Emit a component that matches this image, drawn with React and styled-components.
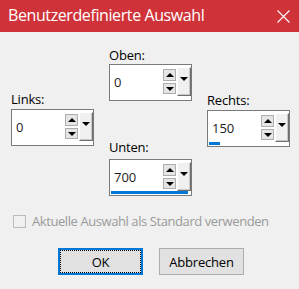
import styled, { createGlobalStyle } from 'styled-components';

const GlobalStyle = createGlobalStyle`
    html, body {
        margin: 0;
        padding: 0;
        background: #f0f0f0;
    }
    * {
        box-sizing: border-box;
    }
`;

const Window = styled.div`
    width: 299px;
    height: 289px;
    background: #f0f0f0;
    font-family: "Open Sans", "Noto Sans", sans-serif;
    font-size: 13px;
    color: #000;
    overflow: hidden;
`;

const TitleBar = styled.div`
    display: flex;
    height: 32px;
    align-items: center;
    justify-content: space-between;
    padding: 0 9px 0 8px;
    background: #cf3339;
    color: #fff;
`;

const Title = styled.span`
    font-size: 16px;
    letter-spacing: -0.4px;
    margin-top: -2px;
`;

const Body = styled.div`
    display: flex;
    flex-direction: column;
    padding: 0 0 0 11px;
`;

const Fields = styled.div`
    display: flex;
    gap: 15px;
`;

const Column = styled.div`
    display: flex;
    flex-direction: column;
    padding-top: ${p => p.$top}px;
`;

const Field = styled.div`
    display: flex;
    flex-direction: column;
    margin-top: ${p => p.$gap || 0}px;
`;

const Label = styled.label`
    height: 16px;
    line-height: 16px;
    margin-bottom: ${p => p.$space}px;
    letter-spacing: -0.2px;
`;

const SpinBox = styled.div`
    display: grid;
    grid-template-columns: 1fr 13px 14px;
    grid-template-rows: 31px 3px;
    column-gap: 1px;
    width: 83px;
    height: 37px;
    border: 1px solid #7a7a7a;
    background: #fff;
`;

const Value = styled.span`
    align-self: center;
    padding-left: 4px;
    padding-top: 3px;
    font-size: 13px;
    color: #1c1c1c;
`;

const Spinner = styled.div`
    display: flex;
    flex-direction: column;
    gap: 2px;
    padding-top: 4px;
`;

const SpinButton = styled.div`
    display: flex;
    height: ${p => p.$h}px;
    align-items: center;
    justify-content: center;
    border: 1px solid #adadad;
    background: #e5e5e5;
`;

const Arrow = styled.span`
    width: 0;
    height: 0;
    border-left: ${p => p.$w}px solid transparent;
    border-right: ${p => p.$w}px solid transparent;
    border-bottom: ${p => (p.$up ? '4px solid #000' : 'none')};
    border-top: ${p => (p.$up ? 'none' : '4px solid #000')};
`;

const DropButton = styled.div`
    display: flex;
    justify-content: center;
    margin-top: 2px;
    padding-top: 9px;
    border-top: 1px solid #fff;
    border-left: 1px solid #fff;
    border-right: 1px solid #6f6f6f;
    border-bottom: 1px solid #6f6f6f;
    background: #f0f0f0;
    box-shadow: inset -1px -1px 0 #c8c8c8;
`;

const Track = styled.div`
    grid-column: 1 / -1;
    padding: 0 2px 1px 1px;
`;

const Bar = styled.div`
    height: 3px;
    background: #0078d7;
`;

const CheckRow = styled.div`
    display: flex;
    align-items: center;
    gap: 6px;
    margin-top: 16px;
    margin-left: 2px;
    color: #9a9a9a;
    letter-spacing: -0.42px;
`;

const CheckBox = styled.span`
    width: 13px;
    height: 13px;
    border: 1px solid #bcbcbc;
    background: #f0f0f0;
`;

const Buttons = styled.div`
    display: flex;
    gap: 16px;
    margin-top: 18px;
    margin-left: 47px;
`;

const Button = styled.button`
    width: 85px;
    height: 27px;
    padding: 0;
    font-family: inherit;
    font-size: 13px;
    color: #000;
    background: #e1e1e1;
    border: ${p => (p.$default ? '2px solid #0078d7' : '1px solid #adadad')};
    letter-spacing: -0.2px;
`;

const Focus = styled.span`
    display: flex;
    height: 100%;
    align-items: center;
    justify-content: center;
    border: 1px dotted #000;
`;

const fields = {
    oben: { label: 'Oben:', value: '0', bar: 0 },
    links: { label: 'Links:', value: '0', bar: 0 },
    rechts: { label: 'Rechts:', value: '150', bar: 11 },
    unten: { label: 'Unten:', value: '700', bar: 77 },
};

const Spin = ({ label, value, bar, space, gap }) => (
    <Field $gap={gap}>
        <Label $space={space}>{label}</Label>
        <SpinBox>
            <Value>{value}</Value>
            <Spinner>
                <SpinButton $h={12}><Arrow $up $w={4} /></SpinButton>
                <SpinButton $h={11}><Arrow $w={4} /></SpinButton>
            </Spinner>
            <DropButton><Arrow $w={4} /></DropButton>
            <Track>
                {bar > 0 && <Bar style={{ width: bar + 'px' }} />}
            </Track>
        </SpinBox>
    </Field>
);

const App = () => {
    return (
        <>
            <GlobalStyle />
            <Window>
                <TitleBar>
                    <Title>Benutzerdefinierte Auswahl</Title>
                    <svg width="13" height="13" viewBox="0 0 13 13">
                        <path d="M0.5 0.5 L12.5 12.5 M12.5 0.5 L0.5 12.5" stroke="#fff" strokeWidth="1.1" />
                    </svg>
                </TitleBar>
                <Body>
                    <Fields>
                        <Column $top={59}>
                            <Spin {...fields.links} space={2} />
                        </Column>
                        <Column $top={15}>
                            <Spin {...fields.oben} space={1} />
                            <Spin {...fields.unten} space={4} gap={38} />
                        </Column>
                        <Column $top={60}>
                            <Spin {...fields.rechts} space={2} />
                        </Column>
                    </Fields>
                    <CheckRow>
                        <CheckBox />
                        Aktuelle Auswahl als Standard verwenden
                    </CheckRow>
                    <Buttons>
                        <Button $default><Focus>OK</Focus></Button>
                        <Button>Abbrechen</Button>
                    </Buttons>
                </Body>
            </Window>
        </>
    );
};

export default App;
